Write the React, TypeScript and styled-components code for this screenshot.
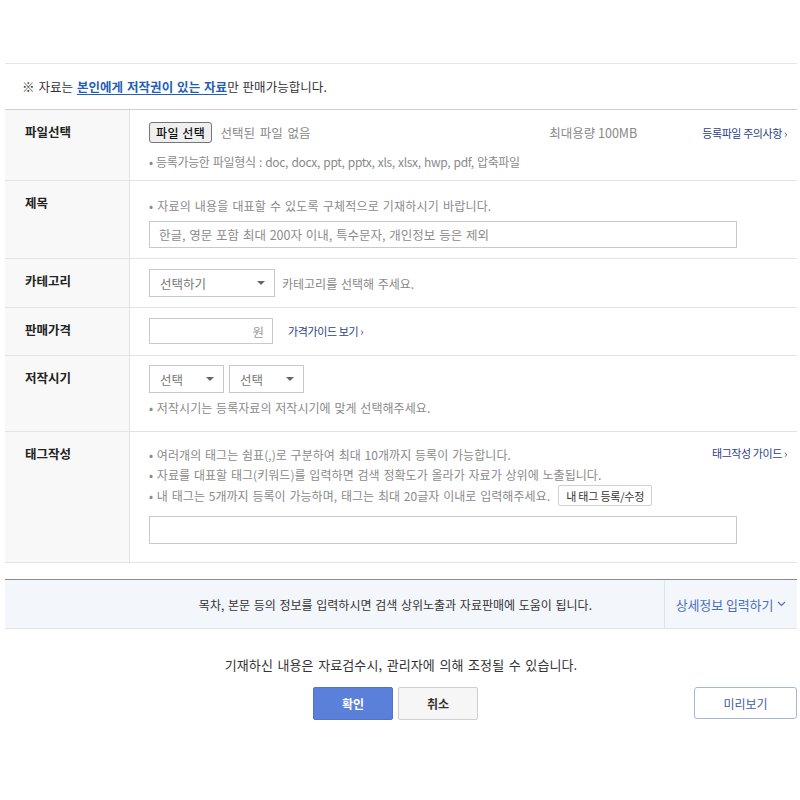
import React from "react";
import styled, { createGlobalStyle } from "styled-components";

const Global = createGlobalStyle`
  html, body { margin: 0; padding: 0; background: #fff; }
  body {
    font-family: "Noto Sans CJK KR", "Noto Sans", sans-serif;
    color: #333;
    font-size: 12px;
    -webkit-font-smoothing: antialiased;
  }
  * { box-sizing: border-box; }
`;

const Page = styled.div`
  padding: 63px 3px 60px 5px;
  width: 800px;
`;

const Notice = styled.div`
  border-top: 1px solid #e6e6e6;
  padding: 14px 0 13px 17px;
  font-size: 12.5px;
  line-height: 18px;
  color: #333;
  letter-spacing: 0.05px;
  word-spacing: 1px;
`;

const NoticeLink = styled.a`
  color: #1f5fb6;
  font-weight: 700;
  text-decoration: underline;
  text-underline-offset: 2px;
`;

const Table = styled.div`
  border-top: 1px solid #cfcfcf;
`;

const Row = styled.div`
  display: grid;
  grid-template-columns: 125px 1fr;
  border-bottom: 1px solid #e3e3e3;
`;

const Label = styled.div`
  background: #f8f8f8;
  border-right: 1px solid #e3e3e3;
  padding: 14px 0 0 20px;
  font-size: 12.5px;
  font-weight: 700;
  line-height: 16px;
  color: #222;
`;

const Cell = styled.div<{ $pt: number; $pb: number }>`
  padding: ${(p) => p.$pt}px 10px ${(p) => p.$pb}px 19px;
  display: flex;
  flex-direction: column;
`;

const Line = styled.div<{ $gap?: number }>`
  display: flex;
  align-items: center;
  gap: ${(p) => p.$gap ?? 6}px;
`;

const Spacer = styled.div`
  flex: 1;
`;

const FileButton = styled.button`
  height: 21px;
  padding: 0 6px;
  border: 1px solid #767676;
  border-radius: 3px;
  background: #efefef;
  font-family: inherit;
  font-size: 12px;
  font-weight: 500;
  color: #111;
  line-height: 19px;
  letter-spacing: 0.5px;
`;

const Muted = styled.span`
  font-size: 12.5px;
  color: #888;
  line-height: 16px;
  word-spacing: 2px;
  margin-left: 3px;
`;

const MaxSize = styled.span`
  font-size: 12.5px;
  color: #888;
  margin-right: 60px;
`;

const GuideLink = styled.a`
  font-size: 11px;
  color: #2e3f86;
  letter-spacing: -0.4px;
  line-height: 16px;
  white-space: nowrap;
`;

const Hint = styled.div<{ $mt?: number; $lh?: number; $ls?: number }>`
  margin-top: ${(p) => p.$mt ?? 0}px;
  font-size: 12px;
  line-height: ${(p) => p.$lh ?? 16}px;
  color: #8a8a8a;
  letter-spacing: ${(p) => p.$ls ?? 0.05}px;
  word-spacing: 1px;
  display: flex;
  align-items: center;
  white-space: pre;
`;

const TextInput = styled.div<{ $mt?: number; $w: number; $h: number }>`
  margin-top: ${(p) => p.$mt ?? 0}px;
  width: ${(p) => p.$w}px;
  height: ${(p) => p.$h}px;
  border: 1px solid #c9c9c9;
  padding: 0 9px;
  display: flex;
  align-items: center;
  font-size: 12.5px;
  color: #8c8c8c;
  word-spacing: 1px;
`;

const PriceBox = styled(TextInput)`
  justify-content: flex-end;
  padding-right: 8px;
  color: #999;
`;

const Select = styled.div<{ $w: number; $h: number }>`
  width: ${(p) => p.$w}px;
  height: ${(p) => p.$h}px;
  border: 1px solid #c9c9c9;
  padding: 0 10px;
  display: flex;
  align-items: center;
  justify-content: space-between;
  font-size: 12.5px;
  color: #777;
`;

const Caret = styled.span`
  width: 0;
  height: 0;
  border-left: 4px solid transparent;
  border-right: 4px solid transparent;
  border-top: 4px solid #666;
  margin-right: -1px;
`;

const Side = styled.span`
  font-size: 12px;
  color: #888;
  word-spacing: 1px;
`;

const HintsRow = styled.div`
  display: flex;
  align-items: flex-start;
  justify-content: space-between;
`;

const SmallButton = styled.button`
  margin-left: 8px;
  height: 21px;
  padding: 0 7px;
  border: 1px solid #d0d0d0;
  background: #fff;
  font-family: inherit;
  font-size: 11px;
  color: #333;
  letter-spacing: -0.2px;
  border-radius: 2px;
`;

const Band = styled.div`
  margin-top: 16px;
  border-top: 1px solid #8a8a8a;
  border-bottom: 1px solid #e3e3e3;
  background: #f3f6fb;
  display: flex;
  height: 50px;
`;

const BandText = styled.div`
  flex: 1;
  display: flex;
  align-items: center;
  justify-content: flex-end;
  padding-right: 72px;
  font-size: 12px;
  color: #333;
  word-spacing: 1px;
`;

const BandAction = styled.div`
  width: 133px;
  border-left: 1px solid #dfe4ec;
  display: flex;
  align-items: center;
  justify-content: center;
  gap: 4px;
  font-size: 13px;
  color: #4a6fc0;
  letter-spacing: -0.1px;
`;

const Footer = styled.div`
  margin-top: 27px;
  text-align: center;
  font-size: 13px;
  color: #333;
  line-height: 18px;
  letter-spacing: 0.1px;
  word-spacing: 1.5px;
`;

const Buttons = styled.div`
  margin-top: 13px;
  display: flex;
  align-items: flex-start;
  padding-left: 308px;
  gap: 5px;
`;

const ActionButton = styled.button<{ $primary?: boolean }>`
  width: 80px;
  height: 33px;
  border: 1px solid ${(p) => (p.$primary ? "#4f73cf" : "#cfcfcf")};
  background: ${(p) => (p.$primary ? "#5b80d9" : "#f6f6f6")};
  color: ${(p) => (p.$primary ? "#fff" : "#333")};
  font-family: inherit;
  font-size: 12px;
  font-weight: 700;
  border-radius: 2px;
`;

const PreviewButton = styled.button`
  margin-left: auto;
  width: 103px;
  height: 32px;
  border: 1px solid #a9b6d3;
  background: #fff;
  color: #3e5ca6;
  font-family: inherit;
  font-size: 12px;
  border-radius: 3px;
`;

const Chevron = () => (
  <svg width="9" height="6" viewBox="0 0 9 6">
    <path d="M1 1l3.5 3.5L8 1" fill="none" stroke="#4a6fc0" strokeWidth="1.2" />
  </svg>
);

export default function App() {
  return (
    <Page>
      <Global />
      <Notice>
        ※ 자료는 <NoticeLink>본인에게 저작권이 있는 자료</NoticeLink>만 판매가능합니다.
      </Notice>
      <Table>
        <Row>
          <Label>파일선택</Label>
          <Cell $pt={12} $pb={10}>
            <Line $gap={5}>
              <FileButton>파일 선택</FileButton>
              <Muted>선택된 파일 없음</Muted>
              <Spacer />
              <MaxSize>최대용량 100MB</MaxSize>
              <GuideLink>등록파일 주의사항 ›</GuideLink>
            </Line>
            <Hint $mt={11} $ls={-0.35}>
              • 등록가능한 파일형식 : doc, docx, ppt, pptx, xls, xlsx, hwp, pdf, 압축파일
            </Hint>
          </Cell>
        </Row>
        <Row>
          <Label>제목</Label>
          <Cell $pt={17} $pb={10}>
            <Hint $ls={0.2}>• 자료의 내용을 대표할 수 있도록 구체적으로 기재하시기 바랍니다.</Hint>
            <TextInput $mt={7} $w={588} $h={27}>
              한글, 영문 포함 최대 200자 이내, 특수문자, 개인정보 등은 제외
            </TextInput>
          </Cell>
        </Row>
        <Row>
          <Label>카테고리</Label>
          <Cell $pt={10} $pb={10}>
            <Line $gap={7}>
              <Select $w={126} $h={28}>
                선택하기
                <Caret />
              </Select>
              <Side>카테고리를 선택해 주세요.</Side>
            </Line>
          </Cell>
        </Row>
        <Row>
          <Label>판매가격</Label>
          <Cell $pt={10} $pb={11}>
            <Line $gap={15}>
              <PriceBox $w={124} $h={26}>원</PriceBox>
              <GuideLink>가격가이드 보기 ›</GuideLink>
            </Line>
          </Cell>
        </Row>
        <Row>
          <Label>저작시기</Label>
          <Cell $pt={9} $pb={15}>
            <Line $gap={5}>
              <Select $w={75} $h={28}>
                선택
                <Caret />
              </Select>
              <Select $w={75} $h={28}>
                선택
                <Caret />
              </Select>
            </Line>
            <Hint $mt={7}>• 저작시기는 등록자료의 저작시기에 맞게 선택해주세요.</Hint>
          </Cell>
        </Row>
        <Row>
          <Label>태그작성</Label>
          <Cell $pt={13} $pb={18}>
            <HintsRow>
              <div>
                <Hint $lh={20}>• 여러개의 태그는 쉼표(,)로 구분하여 최대 10개까지 등록이 가능합니다.</Hint>
                <Hint $lh={20}>• 자료를 대표할 태그(키워드)를 입력하면 검색 정확도가 올라가 자료가 상위에 노출됩니다.</Hint>
                <Hint $lh={20}>
                  • 내 태그는 5개까지 등록이 가능하며, 태그는 최대 20글자 이내로 입력해주세요.
                  <SmallButton>내 태그 등록/수정</SmallButton>
                </Hint>
              </div>
              <GuideLink>태그작성 가이드 ›</GuideLink>
            </HintsRow>
            <TextInput $mt={10} $w={588} $h={28} />
          </Cell>
        </Row>
      </Table>
      <Band>
        <BandText>목차, 본문 등의 정보를 입력하시면 검색 상위노출과 자료판매에 도움이 됩니다.</BandText>
        <BandAction>
          상세정보 입력하기 <Chevron />
        </BandAction>
      </Band>
      <Footer>기재하신 내용은 자료검수시, 관리자에 의해 조정될 수 있습니다.</Footer>
      <Buttons>
        <ActionButton $primary>확인</ActionButton>
        <ActionButton>취소</ActionButton>
        <PreviewButton>미리보기</PreviewButton>
      </Buttons>
    </Page>
  );
}
